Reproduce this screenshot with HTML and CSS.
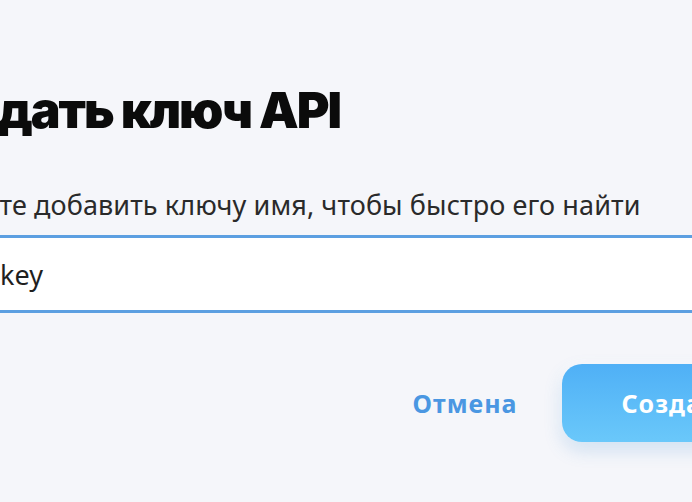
FILE: index.html
```html
<!DOCTYPE html>
<html lang="ru">
<head>
<meta charset="utf-8">
<title>Создать ключ API</title>
<link rel="stylesheet" href="styles.css">
</head>
<body>
  <div class="dialog">
    <h1 class="dialog-title">Создать ключ API</h1>
    <label class="field-label" for="key-name">Вы можете добавить ключу имя, чтобы быстро его найти</label>
    <input class="field-input" id="key-name" type="text" value="Test key">
    <div class="dialog-actions">
      <button class="btn btn-cancel" type="button">Отмена</button>
      <button class="btn btn-primary" type="button">Создать</button>
    </div>
  </div>
</body>
</html>
```

FILE: styles.css
```css
html, body {
  margin: 0;
  height: 100%;
}

body {
  background: #f5f6fa;
  overflow: hidden;
  font-family: "Noto Sans", "Open Sans", sans-serif;
  color: #1f1f1f;
}

.dialog {
  width: 1001px;
  margin-left: -113px;
  padding-top: 80px;
  display: flex;
  flex-direction: column;
}

.dialog-title {
  margin: 0 0 47px 21px;
  font-family: Inter, "Noto Sans", sans-serif;
  font-weight: 900;
  font-size: 50px;
  line-height: 60px;
  letter-spacing: -2px;
  color: #0b0b0b;
}

.field-label {
  margin: 0 0 12px -4px;
  font-size: 27px;
  letter-spacing: 0.1px;
  line-height: 36px;
  color: #2a2a2a;
}

.field-input {
  box-sizing: border-box;
  height: 78px;
  border: 3px solid #5c9fe1;
  background: #fff;
  padding: 0 24px 0 52px;
  font-family: inherit;
  font-size: 27px;
  color: #1f1f1f;
  outline: none;
}

.dialog-actions {
  display: flex;
  justify-content: flex-end;
  align-items: center;
  gap: 45px;
  margin-top: 51px;
  padding-right: 98px;
}

.btn {
  font-family: inherit;
  font-weight: 700;
  font-size: 25px;
  letter-spacing: 1px;
  border: 0;
  cursor: pointer;
}

.btn-cancel {
  background: none;
  padding: 0;
  color: #4a97e2;
}

.btn-primary {
  height: 78px;
  padding: 0 59px;
  border-radius: 20px;
  color: #fff;
  background: linear-gradient(180deg, #4fb0f6 0%, #6ac8fa 100%);
  box-shadow: 0 8px 18px rgba(70, 140, 210, 0.22), 0 0 12px rgba(255, 255, 255, 0.9);
}
```
